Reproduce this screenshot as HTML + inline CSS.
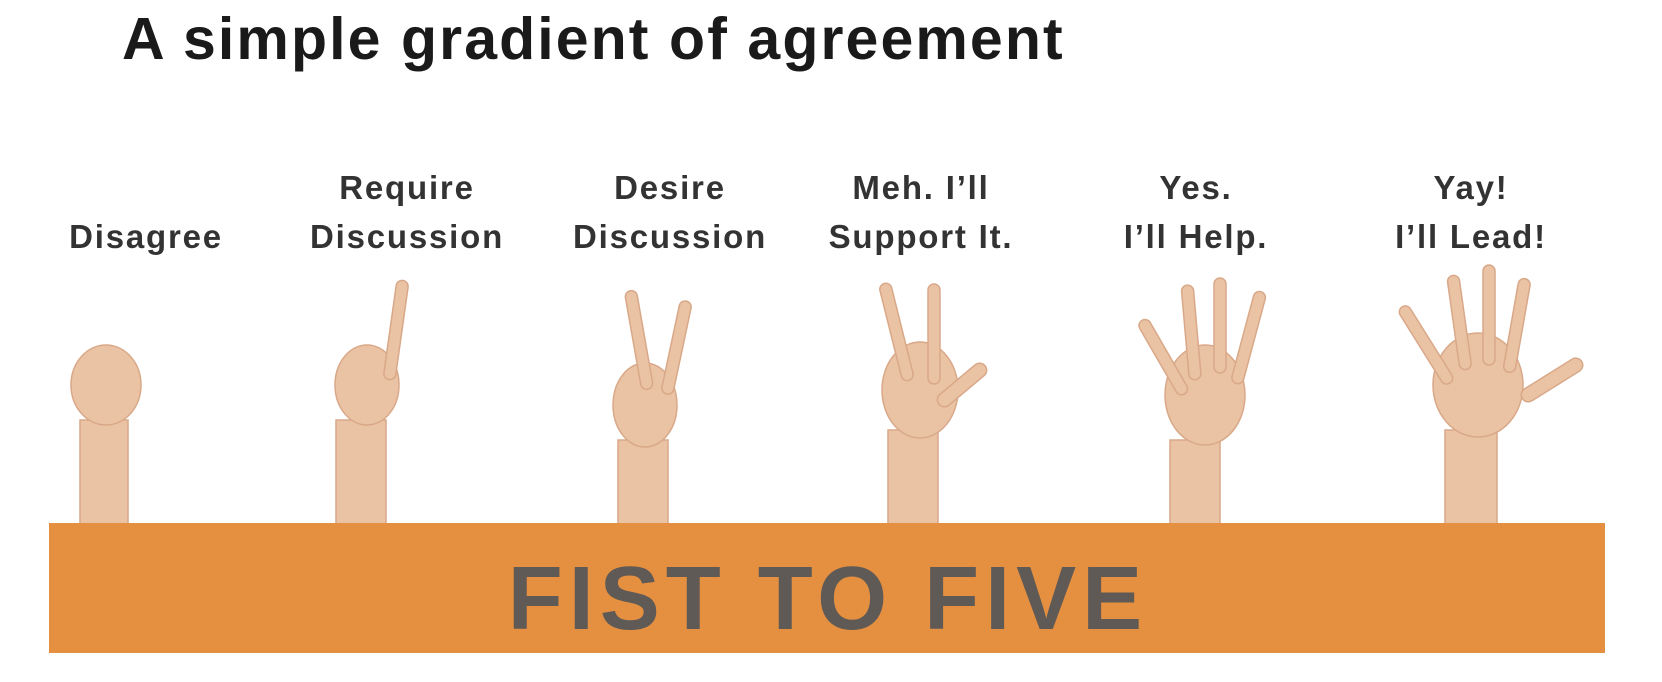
<!DOCTYPE html>
<html><head><meta charset="utf-8"><style>
body{margin:0;width:1662px;height:682px;background:#fff;position:relative;overflow:hidden;font-family:"Liberation Sans",sans-serif}
h1{position:absolute;left:122px;top:5px;margin:0;font-size:59px;font-weight:bold;color:#1a1a1a;letter-spacing:2.1px}
.l{position:absolute;width:260px;text-align:center;font-weight:bold;font-size:33px;line-height:49px;color:#333;letter-spacing:1.8px}
.bar{position:absolute;left:49px;top:523px;width:1556px;height:130px;background:#e58f40}
.ft{position:absolute;left:0;width:100%;top:548px;text-align:center;font-weight:bold;font-size:90px;color:#5f5a55;letter-spacing:6px;margin-left:-3px}
svg{position:absolute;left:0;top:0}
</style></head><body>
<h1>A simple gradient of agreement</h1>
<div class="l" style="left:16px;top:212px">Disagree</div>
<div class="l" style="left:277px;top:163px">Require<br>Discussion</div>
<div class="l" style="left:540px;top:163px">Desire<br>Discussion</div>
<div class="l" style="left:791px;top:163px">Meh. I’ll<br>Support It.</div>
<div class="l" style="left:1066px;top:163px">Yes.<br>I’ll Help.</div>
<div class="l" style="left:1341px;top:163px">Yay!<br>I’ll Lead!</div>
<svg width="1662" height="682" fill="#e9c3a4" stroke="#d9a888" stroke-width="1.5">
<rect x="80" y="420" width="48" height="110"/>
<ellipse cx="106" cy="385" rx="35" ry="40"/>
<rect x="336" y="420" width="50" height="110"/>
<ellipse cx="367" cy="385" rx="32" ry="40"/>
<rect x="390" y="280" width="12" height="100" rx="6" transform="rotate(8 396 330)"/>
<rect x="618" y="440" width="50" height="90"/>
<ellipse cx="645" cy="405" rx="32" ry="42"/>
<rect x="633" y="290" width="12" height="100" rx="6" transform="rotate(-10 639 340)"/>
<rect x="670" y="300" width="12" height="95" rx="6" transform="rotate(12 676 350)"/>
<rect x="888" y="430" width="50" height="100"/>
<ellipse cx="920" cy="390" rx="38" ry="48"/>
<rect x="890" y="282" width="12" height="100" rx="6" transform="rotate(-14 896 330)"/>
<rect x="928" y="284" width="12" height="100" rx="6"/>
<rect x="955" y="355" width="14" height="60" rx="7" transform="rotate(50 962 385)"/>
<rect x="1170" y="440" width="50" height="90"/>
<ellipse cx="1205" cy="395" rx="40" ry="50"/>
<rect x="1156" y="315" width="12" height="85" rx="6" transform="rotate(-30 1162 355)"/>
<rect x="1185" y="285" width="12" height="95" rx="6" transform="rotate(-5 1191 330)"/>
<rect x="1214" y="278" width="12" height="95" rx="6"/>
<rect x="1242" y="290" width="12" height="95" rx="6" transform="rotate(15 1248 340)"/>
<rect x="1445" y="430" width="52" height="100"/>
<ellipse cx="1478" cy="385" rx="45" ry="52"/>
<rect x="1420" y="300" width="12" height="90" rx="6" transform="rotate(-32 1426 345)"/>
<rect x="1453" y="275" width="12" height="95" rx="6" transform="rotate(-8 1459 320)"/>
<rect x="1483" y="265" width="12" height="100" rx="6"/>
<rect x="1511" y="278" width="12" height="95" rx="6" transform="rotate(10 1517 325)"/>
<rect x="1545" y="345" width="14" height="70" rx="7" transform="rotate(58 1552 380)"/>
</svg>
<div class="bar"></div>
<div class="ft">FIST TO FIVE</div>
</body></html>
